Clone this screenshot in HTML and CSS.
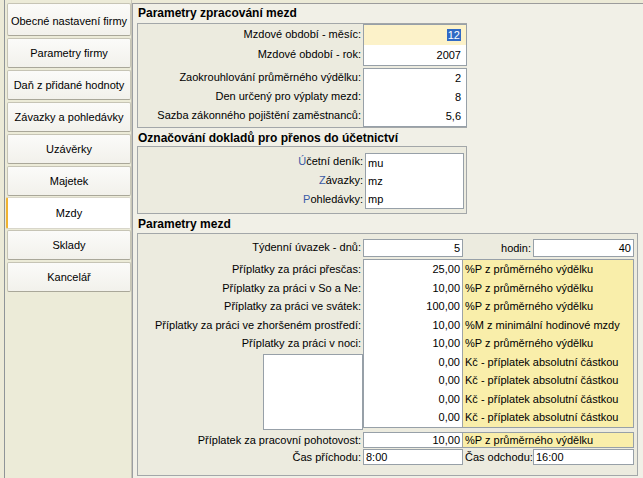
FILE: index.html
```html
<!DOCTYPE html>
<html lang="cs">
<head>
<meta charset="utf-8">
<title>Mzdy</title>
<link rel="stylesheet" href="styles.css">
</head>
<body>
<div class="app">
  <nav class="sidebar">
    <div class="tab tab-first">Obecné nastavení firmy</div>
    <div class="tab">Parametry firmy</div>
    <div class="tab">Daň z přidané hodnoty</div>
    <div class="tab">Závazky a pohledávky</div>
    <div class="tab">Uzávěrky</div>
    <div class="tab">Majetek</div>
    <div class="tab tab-active">Mzdy</div>
    <div class="tab">Sklady</div>
    <div class="tab">Kancelář</div>
  </nav>
  <main class="main">
    <h2 class="sec-title">Parametry zpracování mezd</h2>
    <div class="box box1">
      <div class="grp">
        <div class="lbls">
          <div class="r20">Mzdové období - měsíc:</div>
          <div class="r20">Mzdové období - rok:</div>
        </div>
        <div class="ig">
          <div class="r20 val yellow-pale"><span class="sel">12</span></div>
          <div class="r20 val">2007</div>
        </div>
      </div>
      <div class="grp grp2">
        <div class="lbls">
          <div class="r19">Zaokrouhlování průměrného výdělku:</div>
          <div class="r19">Den určený pro výplaty mezd:</div>
          <div class="r19">Sazba zákonného pojištění zaměstnanců:</div>
        </div>
        <div class="ig">
          <div class="r19 val">2</div>
          <div class="r19 val">8</div>
          <div class="r19 val">5,6</div>
        </div>
      </div>
    </div>

    <h2 class="sec-title t2">Označování dokladů pro přenos do účetnictví</h2>
    <div class="box box2">
      <div class="lbls lbls2">
        <div class="r19"><span class="acc">Ú</span>četní deník:</div>
        <div class="r19"><span class="acc">Z</span>ávazky:</div>
        <div class="r19"><span class="acc">P</span>ohledávky:</div>
      </div>
      <div class="ig ig2">
        <div class="r19 txt">mu</div>
        <div class="r19 txt">mz</div>
        <div class="r19 txt">mp</div>
      </div>
    </div>

    <h2 class="sec-title t3">Parametry mezd</h2>
    <div class="box box3">
      <div class="row3 rowA">
        <div class="lab">Týdenní úvazek - dnů:</div>
        <div class="inp num">5</div>
        <div class="side">
          <span class="side-lab">hodin:</span>
          <div class="inp num side-inp">40</div>
        </div>
      </div>

      <div class="tblwrap">
        <div class="tbl-left">
          <div class="tr">Příplatky za práci přesčas:</div>
          <div class="tr">Příplatky za práci v So a Ne:</div>
          <div class="tr">Příplatky za práci ve svátek:</div>
          <div class="tr">Příplatky za práci ve zhoršeném prostředí:</div>
          <div class="tr">Příplatky za práci v noci:</div>
          <div class="blank"></div>
        </div>
        <div class="tbl">
          <div class="trow"><span class="n">25,00</span><span class="d">%P z průměrného výdělku</span></div>
          <div class="trow"><span class="n">10,00</span><span class="d">%P z průměrného výdělku</span></div>
          <div class="trow"><span class="n">100,00</span><span class="d">%P z průměrného výdělku</span></div>
          <div class="trow"><span class="n">10,00</span><span class="d">%M z minimální hodinové mzdy</span></div>
          <div class="trow"><span class="n">10,00</span><span class="d">%P z průměrného výdělku</span></div>
          <div class="trow"><span class="n">0,00</span><span class="d">Kč - příplatek absolutní částkou</span></div>
          <div class="trow"><span class="n">0,00</span><span class="d">Kč - příplatek absolutní částkou</span></div>
          <div class="trow"><span class="n">0,00</span><span class="d">Kč - příplatek absolutní částkou</span></div>
          <div class="trow"><span class="n">0,00</span><span class="d">Kč - příplatek absolutní částkou</span></div>
        </div>
      </div>

      <div class="row3 rowB">
        <div class="lab">Příplatek za pracovní pohotovost:</div>
        <div class="pair">
          <span class="n">10,00</span><span class="d">%P z průměrného výdělku</span>
        </div>
      </div>

      <div class="row3 rowC">
        <div class="lab">Čas příchodu:</div>
        <div class="inp txt">8:00</div>
        <div class="side side-left">
          <span class="side-lab2">Čas odchodu:</span>
          <div class="inp txt side-inp">16:00</div>
        </div>
      </div>
    </div>
  </main>
</div>
</body>
</html>
```

FILE: styles.css
```css
* { box-sizing: border-box; }

html, body {
  margin: 0;
  padding: 0;
}

body {
  width: 643px;
  height: 478px;
  overflow: hidden;
  background: #ECEAD7;
  font-family: "Liberation Sans", Arial, sans-serif;
  font-size: 11px;
  color: #000;
}

.app {
  display: flex;
  height: 478px;
}

/* ---------- sidebar ---------- */
.sidebar {
  width: 128px;
  margin-left: 4px;
  border-left: 1px solid #8F9498;
  border-right: 1px solid #C8C6B8;
  padding: 3px 0 0 2px;
  display: flex;
  flex-direction: column;
  gap: 2px;
  background: #ECEBD8;
}

.tab {
  height: 30px;
  width: 124px;
  flex: 0 0 auto;
  display: flex;
  align-items: center;
  justify-content: center;
  background: linear-gradient(#FBFBF9, #F2F1EB);
  border: 1px solid #C6C4B5;
  border-bottom-color: #A9A799;
  border-radius: 2px;
  white-space: nowrap;
}

.tab-first {
  height: 33px;
  padding-top: 3px;
}

.tab-active {
  background: #FFFFFF;
  height: 32px;
  margin: -1px 0 -1px -1px;
  width: 125px;
  border-left: 2px solid #F0B331;
  border-color: #D8D6CA;
  border-left-color: #F0B331;
}

/* ---------- main ---------- */
.main {
  flex: 1;
  margin-top: 3px;
  border-left: 1px solid #9B9EA2;
  border-top: 1px solid #9C9C9C;
  background: #F1F0E7;
  padding-left: 4px;
}

.sec-title {
  margin: 0;
  font-size: 12px;
  font-weight: bold;
  line-height: 19px;
  height: 19px;
  padding-left: 1px;
}

.t2 {
  height: 18px;
  line-height: 21px;
}

.t3 {
  height: 19px;
  line-height: 21px;
}

.box {
  background: #ECEBDF;
  border: 1px solid #A3A7A9;
}

.lbls {
  width: 225px;
  display: flex;
  flex-direction: column;
  text-align: right;
  padding-right: 2px;
  white-space: nowrap;
}

.ig {
  background: #FFFFFF;
  border: 1px solid #97A0A8;
  display: flex;
  flex-direction: column;
}

.r20 { height: 20px; line-height: 20px; }
.r19 { height: 19px; line-height: 19px; }

.val {
  text-align: right;
  padding-right: 5px;
}

.txt {
  text-align: left;
  padding-left: 2px;
}

/* section 1 */
.box1 {
  width: 330px;
  border-right: 0;
}

.grp {
  display: flex;
}

.grp2 {
  margin-top: 2px;
}

.box1 .ig {
  width: 104px;
}

.yellow-pale {
  background: #FCF2C9;
}

.sel {
  background: #316AC5;
  color: #FFFFFF;
  padding: 0 1px;
}

/* section 2 */
.box2 {
  width: 330px;
  display: flex;
  padding: 6px 2px 4px 0;
}

.lbls2 {
  width: 227px;
  margin-top: -1px;
}

.ig2 {
  width: 99px;
  height: 56px;
}

.ig2 .r19 {
  height: 18px;
  line-height: 18px;
}

.acc {
  color: #3A5AA6;
}

/* section 3 */
.box3 {
  width: 501px;
  height: 243px;
  padding: 5px 3px 0 0;
}

.row3 {
  display: grid;
  grid-template-columns: 225px 100px 171px;
  align-items: center;
}

.lab {
  text-align: right;
  padding-right: 2px;
  white-space: nowrap;
}

.inp {
  background: #FFFFFF;
  border: 1px solid #97A0A8;
  white-space: nowrap;
}

.num {
  text-align: right;
  padding-right: 2px;
}

.rowA {
  height: 18px;
}

.rowA .inp,
.rowA .lab {
  height: 18px;
  line-height: 16px;
}

.side {
  display: flex;
  align-items: center;
  justify-content: flex-end;
  height: 100%;
}

.side-lab {
  padding-right: 2px;
}

.side-inp {
  width: 101px;
  flex: 0 0 auto;
}

.side-left {
  justify-content: space-between;
}

.side-lab2 {
  padding-left: 2px;
}

.tblwrap {
  display: flex;
  margin-top: 2px;
}

.tbl-left {
  width: 225px;
  display: flex;
  flex-direction: column;
  padding-top: 1px;
}

.tr {
  height: 18.56px;
  line-height: 18.56px;
  text-align: right;
  padding-right: 2px;
  white-space: nowrap;
}

.blank {
  align-self: flex-end;
  width: 100px;
  height: 76px;
  margin-top: 1px;
  margin-bottom: -2px;
  background: #FFFFFF;
  border: 1px solid #97A0A8;
}

.tbl {
  width: 271px;
  height: 169px;
  border: 1px solid #97A0A8;
  display: flex;
  flex-direction: column;
  background: linear-gradient(90deg, #FFFFFF 0 98px, #9EA4A8 98px 99px, #F9EEAA 99px);
}

.trow {
  height: 18.56px;
  line-height: 18.56px;
  display: grid;
  grid-template-columns: 99px 1fr;
  white-space: nowrap;
}

.n {
  text-align: right;
  padding-right: 3px;
}

.d {
  padding-left: 2px;
}

.rowB {
  margin-top: 4px;
  height: 16px;
}

.pair {
  grid-column: 2 / 4;
  height: 16px;
  line-height: 14px;
  display: grid;
  grid-template-columns: 99px 1fr;
  border: 1px solid #97A0A8;
  background: linear-gradient(90deg, #FFFFFF 0 98px, #9EA4A8 98px 99px, #F9EEAA 99px);
  white-space: nowrap;
}

.rowC {
  margin-top: 1px;
  height: 16px;
}

.rowC .inp {
  height: 16px;
  line-height: 14px;
}
```
